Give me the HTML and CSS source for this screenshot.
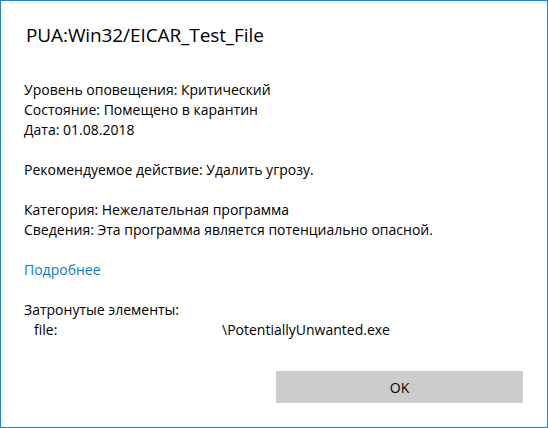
FILE: index.html
```html
<!DOCTYPE html>
<html lang="ru">
<head>
<meta charset="utf-8">
<link rel="stylesheet" href="styles.css">
</head>
<body>
<div class="dialog">
  <div class="title">PUA:Win32/EICAR_Test_File</div>
  <div class="content">
    <p>Уровень оповещения: Критический<br>Состояние: Помещено в карантин<br>Дата: 01.08.2018</p>
    <p>Рекомендуемое действие: Удалить угрозу.</p>
    <p>Категория: Нежелательная программа<br>Сведения: Эта программа является потенциально опасной.</p>
    <p><a class="link" href="#">Подробнее</a></p>
    <p>Затронутые элементы:</p>
    <div class="item"><span class="item-type">file:</span><span class="item-path">\PotentiallyUnwanted.exe</span></div>
  </div>
  <div class="footer">
    <button class="ok">OK</button>
  </div>
</div>
</body>
</html>
```
FILE: styles.css
```css
html, body {
  margin: 0;
  padding: 0;
  background: #ffffff;
}
.dialog {
  box-sizing: border-box;
  width: 548px;
  height: 428px;
  border: 1px solid #1883d7;
  background: #fff;
  color: #000;
  font-family: "Open Sans", "Noto Sans", sans-serif;
  display: flex;
  flex-direction: column;
  padding: 0 24px 0 23px;
}
.title {
  font-size: 19px;
  line-height: 26px;
  margin-top: 21px;
  margin-left: 2px;
  letter-spacing: -0.1px;
}
.content {
  margin-top: 32px;
  font-size: 14px;
  line-height: 20px;
}
.content p {
  margin: 0 0 20px 0;
}
.link {
  color: #0a78d7;
  text-decoration: none;
}
.item {
  display: flex;
  margin-top: -20px;
  padding-left: 10px;
}
.item-type {
  width: 188px;
}
.footer {
  margin-top: auto;
  display: flex;
  justify-content: flex-end;
  padding-bottom: 24px;
}
.ok {
  width: 247px;
  height: 32px;
  border: none;
  background: #cccccc;
  font-family: inherit;
  font-size: 14px;
  color: #000;
  padding: 0;
}
```
